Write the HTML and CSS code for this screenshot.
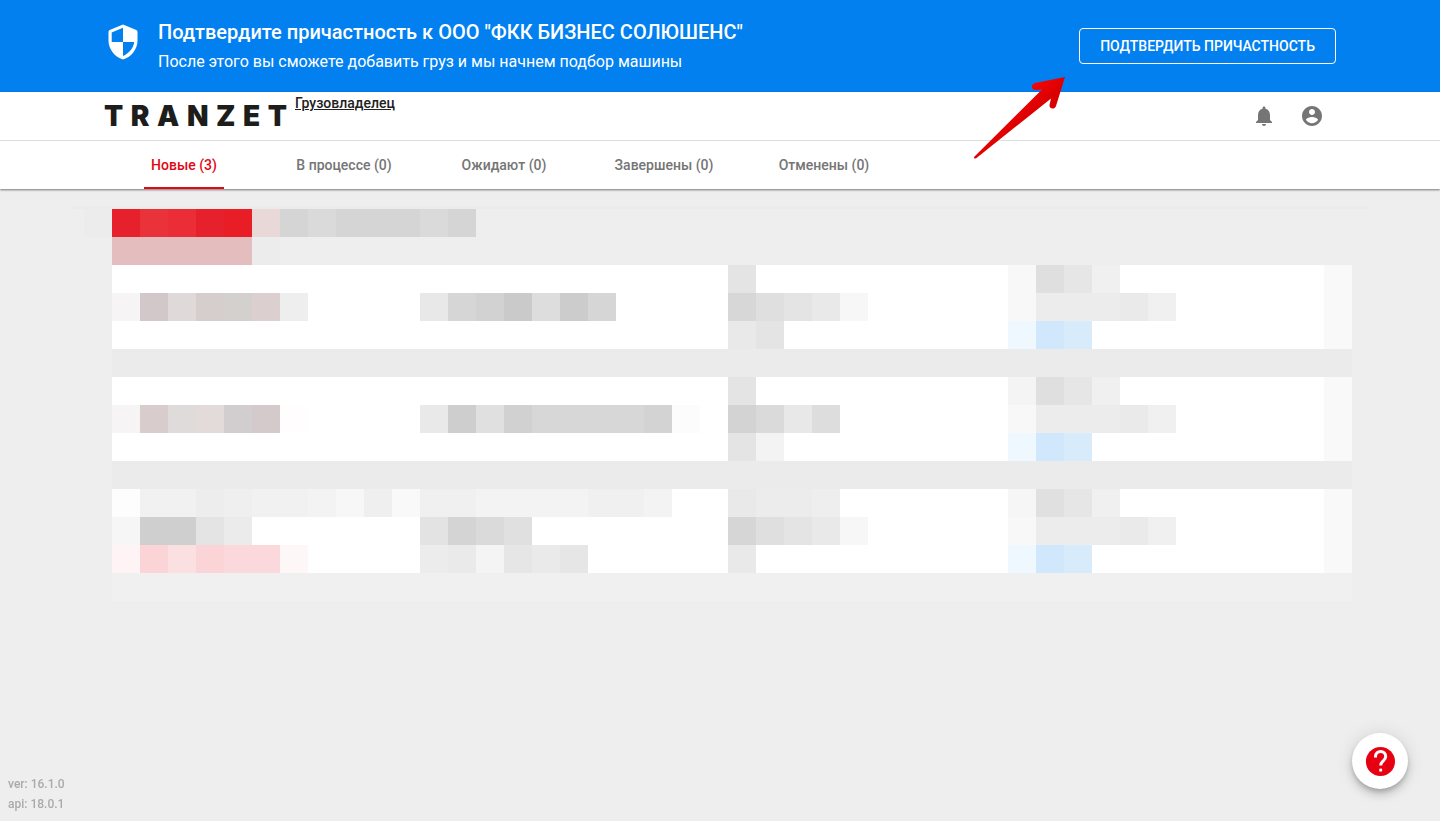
FILE: index.html
```html
<!DOCTYPE html>
<html lang="ru">
<head>
<meta charset="utf-8">
<meta name="viewport" content="width=device-width, initial-scale=1">
<title>Tranzet</title>
<link rel="stylesheet" href="styles.css">
</head>
<body>
<section class="banner">
  <div class="container banner-row">
    <svg class="shield" viewBox="0 0 38 38" aria-hidden="true">
      <path fill="#fff" d="M19 1.500 32.300 7Q33.500 7.600 33.500 9V17.500C33.500 26 27.500 34 19 36.500C10.500 34 4.500 26 4.500 17.500V9Q4.500 7.600 5.700 7Z"/>
      <path fill="#0280f0" d="M19 4.700 7.700 9.500V19H19ZM19 19V33C25 30.500 29.600 25 30.200 19Z"/>
    </svg>
    <div class="banner-text">
      <h1 class="banner-title">Подтвердите причастность к ООО "ФКК БИЗНЕС СОЛЮШЕНС"</h1>
      <p class="banner-note">После этого вы сможете добавить груз и мы начнем подбор машины</p>
    </div>
    <button class="confirm" type="button">ПОДТВЕРДИТЬ ПРИЧАСТНОСТЬ</button>
  </div>
</section>

<header class="header">
  <div class="container bar">
    <div class="logo" role="img" aria-label="TRANZET"><span>T</span><span>R</span><span>A</span><span>N</span><span>Z</span><span>E</span><span>T</span></div>
    <a class="role" href="#">Грузовладелец</a>
    <div class="actions">
      <button class="icon-button" type="button" aria-label="Уведомления">
        <svg viewBox="0 0 24 24" aria-hidden="true"><path d="M12 22c1.100 0 2-.9 2-2h-4c0 1.100.9 2 2 2zm6-6v-5c0-3.070-1.630-5.640-4.500-6.320V4c0-.83-.67-1.500-1.500-1.500s-1.500.67-1.500 1.500v.68C7.640 5.360 6 7.920 6 11v5l-2 2v1h16v-1l-2-2z"/></svg>
      </button>
      <button class="icon-button" type="button" aria-label="Профиль">
        <svg viewBox="0 0 24 24" aria-hidden="true"><path d="M12 2C6.480 2 2 6.480 2 12s4.480 10 10 10 10-4.480 10-10S17.520 2 12 2zm0 3c1.660 0 3 1.340 3 3s-1.340 3-3 3-3-1.340-3-3 1.340-3 3-3zm0 14.200c-2.500 0-4.710-1.280-6-3.220.03-1.990 4-3.080 6-3.080 1.990 0 5.970 1.090 6 3.080-1.290 1.940-3.500 3.220-6 3.220z"/></svg>
      </button>
    </div>
    <svg class="arrow" viewBox="0 0 96 86" aria-hidden="true">
      <defs><linearGradient id="red" x1="0.4" y1="0.3" x2="0.6" y2="0.5"><stop offset="0" stop-color="#fa0508"/><stop offset="1" stop-color="#d90000"/></linearGradient></defs>
      <path fill="url(#red)" d="M93 2 63 8C58 10 59.500 15.500 64 15L70 14.500 2 82Q2 84.500 4.500 83L79 23.500 77.500 30C77 34 82.500 35 84 31Z"/>
    </svg>
  </div>
  <nav class="tabs-strip">
    <div class="container tabs">
      <a class="tab tab-active" href="#" aria-current="page">Новые (3)</a>
      <a class="tab" href="#">В процессе (0)</a>
      <a class="tab" href="#">Ожидают (0)</a>
      <a class="tab" href="#">Завершены (0)</a>
      <a class="tab" href="#">Отменены (0)</a>
    </div>
  </nav>
</header>

<main class="content">
  <div class="top-line"></div>
  <div class="toolbar">
    <svg class="m14" viewBox="-1 0 14 2" aria-hidden="true">
      <path fill="#ececec" d="M-1 0h1v1h-1zM5 1h1v1h-1z"/>
      <path fill="#e6212b" d="M0 0h1v1h-1zM3 0h1v1h-1z"/><path fill="#e93239" d="M1 0h1v1h-1z"/><path fill="#ea2d36" d="M2 0h1v1h-1z"/><path fill="#e81d26" d="M4 0h1v1h-1z"/>
      <path fill="#e8d8d8" d="M5 0h1v1h-1z"/><path fill="#d5d5d5" d="M6 0h1v1h-1zM8 0h3v1h-3zM12 0h1v1h-1z"/><path fill="#dadada" d="M7 0h1v1h-1zM11 0h1v1h-1z"/>
      <path fill="#e4bdbe" d="M0 1h5v1h-5z"/>
    </svg>
  </div>

  <div class="list">
    <article class="card">
      <svg class="m11" viewBox="0 0 11 3" aria-hidden="true">
        <path fill="#f7f4f5" d="M0 1h1v1h-1z"/><path fill="#d2c8c9" d="M1 1h1v1h-1z"/><path fill="#dfd9d9" d="M2 1h1v1h-1z"/><path fill="#d6cecc" d="M3 1h1v1h-1z"/><path fill="#d4d0ce" d="M4 1h1v1h-1z"/><path fill="#dbcfcf" d="M5 1h1v1h-1z"/><path fill="#eeeeee" d="M6 1h1v1h-1z"/>
      </svg>
      <svg class="m11" viewBox="0 0 11 3" aria-hidden="true">
        <path fill="#e8e8e8" d="M0 1h1v1h-1z"/><path fill="#d6d6d6" d="M1 1h1v1h-1zM6 1h1v1h-1z"/><path fill="#d2d2d2" d="M2 1h1v1h-1z"/><path fill="#cacaca" d="M3 1h1v1h-1z"/><path fill="#dddddd" d="M4 1h1v1h-1z"/><path fill="#cccccc" d="M5 1h1v1h-1z"/>
      </svg>
      <svg class="m10" viewBox="0 0 10 3" aria-hidden="true">
        <path fill="#e4e4e4" d="M0 0h1v1h-1zM2 1h1v1h-1zM1 2h1v1h-1z"/><path fill="#d7d7d7" d="M0 1h1v1h-1z"/><path fill="#dfdfdf" d="M1 1h1v1h-1z"/><path fill="#e9e9e9" d="M3 1h1v1h-1zM0 2h1v1h-1z"/><path fill="#f7f7f7" d="M4 1h1v1h-1z"/>
      </svg>
      <svg class="m6" viewBox="0 0 6 3" aria-hidden="true">
        <path fill="#f8f8f8" d="M0 0h1v2h-1z"/><path fill="#dfdfdf" d="M1 0h1v1h-1z"/><path fill="#e6e6e6" d="M2 0h1v1h-1z"/><path fill="#f0f0f0" d="M3 0h1v1h-1zM5 1h1v1h-1z"/><path fill="#ececec" d="M1 1h3v1h-3z"/><path fill="#eaeaea" d="M4 1h1v1h-1z"/><path fill="#f0f8ff" d="M0 2h1v1h-1z"/><path fill="#d0e7fc" d="M1 2h1v1h-1z"/><path fill="#d8ebfa" d="M2 2h1v1h-1z"/>
      </svg>
    </article>

    <article class="card">
      <svg class="m11" viewBox="0 0 11 3" aria-hidden="true">
        <path fill="#f6f4f5" d="M0 1h1v1h-1z"/><path fill="#d8cdcc" d="M1 1h1v1h-1z"/><path fill="#e0dbdb" d="M2 1h1v1h-1z"/><path fill="#e3dada" d="M3 1h1v1h-1z"/><path fill="#d2cecf" d="M4 1h1v1h-1z"/><path fill="#d4c9cb" d="M5 1h1v1h-1z"/><path fill="#fffdfe" d="M6 1h1v1h-1z"/>
      </svg>
      <svg class="m11" viewBox="0 0 11 3" aria-hidden="true">
        <path fill="#e9e9e9" d="M0 1h1v1h-1z"/><path fill="#cecece" d="M1 1h1v1h-1z"/><path fill="#e0e0e0" d="M2 1h1v1h-1z"/><path fill="#d1d1d1" d="M3 1h1v1h-1z"/><path fill="#d7d7d7" d="M4 1h4v1h-4z"/><path fill="#d3d3d3" d="M8 1h1v1h-1z"/><path fill="#fcfcfc" d="M9 1h1v1h-1z"/>
      </svg>
      <svg class="m10" viewBox="0 0 10 3" aria-hidden="true">
        <path fill="#e4e4e4" d="M0 0h1v1h-1zM0 2h1v1h-1z"/><path fill="#d3d3d3" d="M0 1h1v1h-1z"/><path fill="#dadada" d="M1 1h1v1h-1z"/><path fill="#e8e8e8" d="M2 1h1v1h-1z"/><path fill="#dddddd" d="M3 1h1v1h-1z"/><path fill="#f3f3f3" d="M1 2h1v1h-1z"/>
      </svg>
      <svg class="m6" viewBox="0 0 6 3" aria-hidden="true">
        <path fill="#f4f4f4" d="M0 0h1v1h-1z"/><path fill="#f8f8f8" d="M0 1h1v1h-1z"/><path fill="#dfdfdf" d="M1 0h1v1h-1z"/><path fill="#e6e6e6" d="M2 0h1v1h-1z"/><path fill="#f0f0f0" d="M3 0h1v1h-1zM5 1h1v1h-1z"/><path fill="#ececec" d="M1 1h3v1h-3z"/><path fill="#eaeaea" d="M4 1h1v1h-1z"/><path fill="#f0f8ff" d="M0 2h1v1h-1z"/><path fill="#d0e7fc" d="M1 2h1v1h-1z"/><path fill="#d8ebfa" d="M2 2h1v1h-1z"/>
      </svg>
    </article>

    <article class="card">
      <svg class="m11" viewBox="0 0 11 3" aria-hidden="true">
        <path fill="#fdfdfd" d="M0 0h1v1h-1z"/><path fill="#f1f1f1" d="M1 0h2v1h-2zM5 0h2v1h-2z"/><path fill="#ededed" d="M3 0h1v1h-1z"/><path fill="#efefef" d="M4 0h1v1h-1zM9 0h1v1h-1z"/><path fill="#f3f3f3" d="M7 0h1v1h-1z"/><path fill="#f7f7f7" d="M8 0h1v1h-1z"/><path fill="#f9f9f9" d="M10 0h1v1h-1z"/>
        <path fill="#f6f6f6" d="M0 1h1v1h-1z"/><path fill="#cfcfcf" d="M1 1h2v1h-2z"/><path fill="#e4e4e4" d="M3 1h1v1h-1z"/><path fill="#ebebeb" d="M4 1h1v1h-1z"/>
        <path fill="#fff4f5" d="M0 2h1v1h-1z"/><path fill="#fbd4d8" d="M1 2h1v1h-1zM3 2h1v1h-1z"/><path fill="#fbe0e1" d="M2 2h1v1h-1z"/><path fill="#fbd8db" d="M4 2h2v1h-2z"/><path fill="#fdf8f7" d="M6 2h1v1h-1z"/>
      </svg>
      <svg class="m11" viewBox="0 0 11 3" aria-hidden="true">
        <path fill="#f0f0f0" d="M0 0h2v1h-2zM6 0h2v1h-2z"/><path fill="#f3f3f3" d="M2 0h4v1h-4zM8 0h1v1h-1z"/>
        <path fill="#e3e3e3" d="M0 1h1v1h-1z"/><path fill="#d4d4d4" d="M1 1h1v1h-1z"/><path fill="#dadada" d="M2 1h1v1h-1z"/><path fill="#e0e0e0" d="M3 1h1v1h-1z"/>
        <path fill="#ececec" d="M0 2h1v1h-1z"/><path fill="#eaeaea" d="M1 2h1v1h-1zM4 2h1v1h-1z"/><path fill="#f4f4f4" d="M2 2h1v1h-1z"/><path fill="#e6e6e6" d="M3 2h1v1h-1zM5 2h1v1h-1z"/>
      </svg>
      <svg class="m10" viewBox="0 0 10 3" aria-hidden="true">
        <path fill="#e9e9e9" d="M0 0h1v1h-1zM3 1h1v1h-1zM0 2h1v1h-1z"/><path fill="#ececec" d="M1 0h2v1h-2z"/><path fill="#eeeeee" d="M3 0h1v1h-1z"/><path fill="#d6d6d6" d="M0 1h1v1h-1z"/><path fill="#dfdfdf" d="M1 1h1v1h-1z"/><path fill="#e4e4e4" d="M2 1h1v1h-1z"/><path fill="#f7f7f7" d="M4 1h1v1h-1z"/>
      </svg>
      <svg class="m6" viewBox="0 0 6 3" aria-hidden="true">
        <path fill="#f6f6f6" d="M0 0h1v1h-1z"/><path fill="#f8f8f8" d="M0 1h1v1h-1z"/><path fill="#e0e0e0" d="M1 0h1v1h-1z"/><path fill="#e6e6e6" d="M2 0h1v1h-1z"/><path fill="#f0f0f0" d="M3 0h1v1h-1zM5 1h1v1h-1z"/><path fill="#ececec" d="M1 1h3v1h-3z"/><path fill="#eaeaea" d="M4 1h1v1h-1z"/><path fill="#f0f8ff" d="M0 2h1v1h-1z"/><path fill="#d0e7fc" d="M1 2h1v1h-1z"/><path fill="#d8ebfa" d="M2 2h1v1h-1z"/>
      </svg>
    </article>
    <div class="list-end"></div>
  </div>
</main>

<footer class="version">ver: 16.1.0<br>api: 18.0.1</footer>
<button class="help" type="button" aria-label="Помощь">
  <svg viewBox="0 0 24 24" aria-hidden="true"><circle cx="12.300" cy="12.300" r="9.700"/><path class="mark" d="M9 9.600V9a3.400 3.400 0 0 1 6.800 0c0 1.700-1 2.300-2 3.200-.9.800-1.300 1.300-1.300 2.800"/><path class="dot" d="M11.500 17.100h1.900v1.900h-1.900z"/></svg>
</button>
</body>
</html>
```
FILE: styles.css
```css
* { box-sizing: border-box; }

body {
  margin: 0;
  min-height: 100vh;
  background: #eee;
  color: #212121;
  font-family: Roboto, "Liberation Sans", sans-serif;
  font-size: 14px;
}

button { font-family: inherit; cursor: pointer; }

.container { margin: 0 104px; }

.banner { background: #0280f0; color: #fff; }

.banner-row {
  display: flex;
  align-items: center;
  min-height: 92px;
}

.shield { flex: none; width: 38px; height: 38px; margin-bottom: 8px; }

.banner-text { flex: 1; margin-left: 16px; }

.banner-title {
  margin: 0;
  font-size: 20px;
  line-height: 32px;
  font-weight: 500;
}

.banner-note { margin: 0; font-size: 16px; line-height: 28px; }

.confirm {
  height: 36px;
  padding: 0 20px;
  border: 1px solid #fff;
  border-radius: 4px;
  background: transparent;
  color: #fff;
  font-size: 14px;
  font-weight: 500;
}

.header {
  position: relative;
  background: #fff;
  box-shadow: 0 1px 2px rgba(0, 0, 0, 0.5);
}

.bar { position: relative; display: flex; height: 48px; }

.logo {
  display: flex;
  justify-content: space-between;
  width: 183px;
  color: #1d1d1b;
  font-family: Inter, sans-serif;
  font-size: 28px;
  font-weight: 900;
  line-height: 48px;
}

.role {
  margin-left: 8px;
  color: #212121;
  font-weight: 500;
  line-height: 22px;
  text-decoration: underline;
}

.actions { display: flex; margin-left: auto; }

.icon-button {
  width: 48px;
  height: 48px;
  padding: 12px;
  border: 0;
  background: transparent;
  fill: #757575;
}

.icon-button svg { display: block; }

.arrow {
  position: absolute;
  right: 268px;
  top: -17px;
  width: 96px;
  height: 86px;
  pointer-events: none;
}

.tabs-strip { border-top: 1px solid #ddd; }

.tabs { display: flex; }

.tab {
  position: relative;
  width: 160px;
  color: #757575;
  font-weight: 500;
  line-height: 48px;
  text-align: center;
  text-decoration: none;
}

.tab-active { color: #e30613; }

.tab-active::after {
  content: "";
  position: absolute;
  left: 40px;
  right: 40px;
  bottom: 0;
  height: 2px;
  background: #e30613;
}

.content { padding-top: 17px; }

.content svg { display: block; height: 84px; shape-rendering: crispEdges; }

.top-line { height: 3px; margin: 0 72px; background: #ebebeb; }

.content .m14 { width: 392px; height: 56px; }
.m11 { width: 308px; }
.m10 { width: 280px; }
.m6 { width: 168px; }

.toolbar { margin-left: 84px; }

.list { margin: 0 88px 0 112px; background: #ebebeb; }

.card {
  display: flex;
  margin-bottom: 28px;
  border-right: 28px solid #f9f9f9;
  background: #fff;
}

.card:nth-child(3) { margin-bottom: 0; }

.list-end { height: 28px; background: #f0f0f0; }

.version {
  position: fixed;
  left: 8px;
  bottom: 7px;
  color: #aaa;
  font-size: 12px;
  font-weight: 500;
  line-height: 20px;
}

.help {
  position: fixed;
  right: 32px;
  bottom: 32px;
  width: 56px;
  height: 56px;
  padding: 10px;
  border: 0;
  border-radius: 50%;
  background: #fff;
  box-shadow: 0 3px 5px -1px rgba(0, 0, 0, 0.2), 0 6px 10px rgba(0, 0, 0, 0.14), 0 1px 18px rgba(0, 0, 0, 0.12);
  fill: #e60012;
}

.help svg { display: block; }
.help .mark { fill: none; stroke: #fff; stroke-width: 2; }
.help .dot { fill: #fff; }
```
